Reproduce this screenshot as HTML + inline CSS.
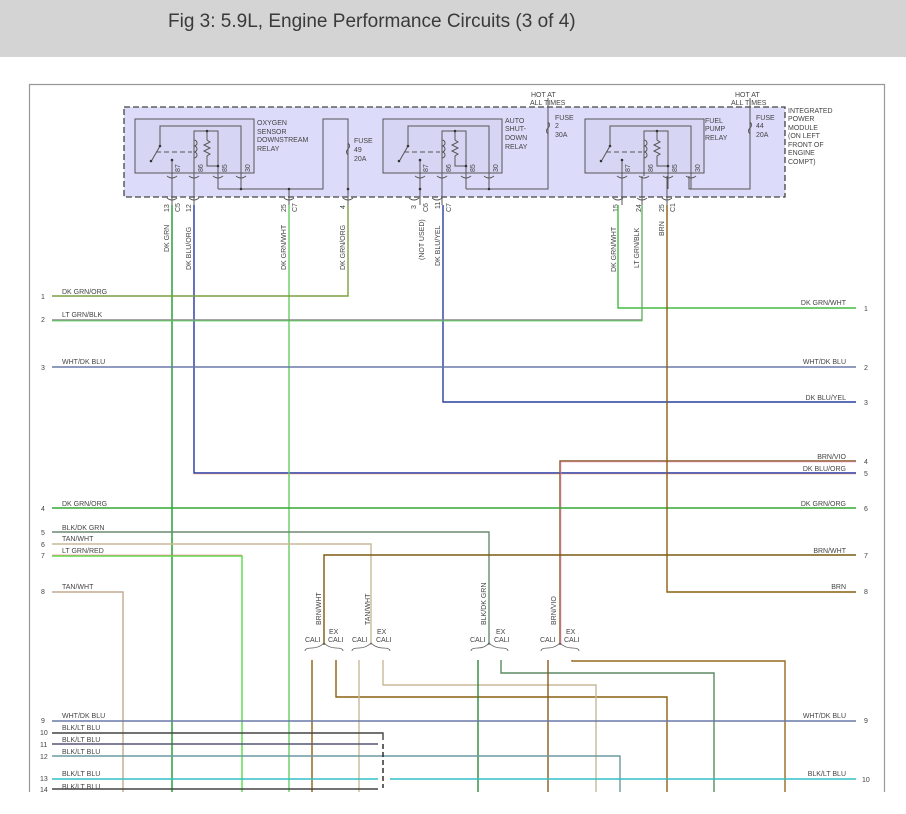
<!DOCTYPE html>
<html><head><meta charset="utf-8"><style>
html,body{margin:0;padding:0;background:#fff;}
body{width:906px;height:814px;overflow:hidden;position:relative;font-family:"Liberation Sans",sans-serif;}
.hdr{position:absolute;left:0;top:0;width:906px;height:57px;background:#d4d4d4;}
.hdr span{position:absolute;left:168px;top:11px;font-size:19px;color:#3a3a3a;}
svg{position:absolute;left:0;top:0;}
text{font-family:"Liberation Sans",sans-serif;font-size:7px;fill:#444;}
</style></head><body>
<div class="hdr"><span>Fig 3: 5.9L, Engine Performance Circuits (3 of 4)</span></div>
<svg width="906" height="814" viewBox="0 0 906 814">
<defs>
<g id="relay">
<rect x="135" y="119" width="119" height="54" fill="#d6d6f4" stroke="#555" stroke-width="1"/>
<path d="M160 146 V126 H241 V176" fill="none" stroke="#555"/>
<path d="M160 146 L152 160" stroke="#555" fill="none"/>
<circle cx="160" cy="146" r="1.3" fill="#333"/><circle cx="151" cy="161" r="1.3" fill="#333"/>
<path d="M156 152 H192" stroke="#555" stroke-dasharray="5,3" fill="none"/>
<path d="M194 176 V131 H218 V176" fill="none" stroke="#555"/>
<path d="M207 131 V140 l3 2 -6 3 6 3 -6 3 6 3 -3 2 V166 H218" fill="none" stroke="#555"/>
<path d="M194 140 a3 3 0 0 1 0 6 a3 3 0 0 1 0 6 a3 3 0 0 1 0 6" fill="none" stroke="#555"/>
<circle cx="207" cy="131" r="1.3" fill="#333"/><circle cx="218" cy="166" r="1.3" fill="#333"/>
<path d="M172 176 V161" stroke="#555"/><circle cx="172" cy="160" r="1.3" fill="#333"/>
<text x="0" y="0" transform="translate(180,172) rotate(-90)">87</text>
<text transform="translate(203,172) rotate(-90)">86</text>
<text transform="translate(227,172) rotate(-90)">85</text>
<text transform="translate(250,172) rotate(-90)">30</text>
<path d="M167 176 q5 4 10 0 M189 176 q5 4 10 0 M213 176 q5 4 10 0 M236 176 q5 4 10 0" fill="none" stroke="#555"/>
<path d="M218 176 V189 M241 176 V189" stroke="#555"/>
</g>
</defs>
<path d="M29.5 792 V84.5 H884.5 V792" fill="none" stroke="#999" stroke-width="1.2"/>
<rect x="124" y="107" width="661" height="90" fill="#dcdcfa" stroke="#444" stroke-width="1.3" stroke-dasharray="6,3"/>
<use href="#relay"/>
<use href="#relay" transform="translate(248,0)"/>
<use href="#relay" transform="translate(450,0)"/>
<g stroke="#555" fill="none">
<path d="M218 189 H323 V119 H348 V205"/>
<path d="M172 176 V205 M194 176 V205 M420 176 V205 M442 176 V205 M622 176 V205 M642 176 V205 M667 176 V205"/>
<path d="M289 189 V205"/>
<path d="M466 189 H548 V98"/>
<path d="M689 176 V189 H750 V98"/>
<path d="M348 143 q3 3 0 6 q-3 3 0 6"/><path d="M548 122 q3 3 0 6 q-3 3 0 6"/><path d="M750 122 q3 3 0 6 q-3 3 0 6"/>
<path d="M167 198 q5 4 10 0 M189 198 q5 4 10 0 M284 198 q5 4 10 0 M343 198 q5 4 10 0 M409 198 q5 4 10 0 M432 198 q5 4 10 0 M613 198 q5 4 10 0 M637 198 q5 4 10 0 M662 198 q5 4 10 0"/>
</g>
<g fill="#333"><circle cx="241" cy="189" r="1.3"/><circle cx="289" cy="189" r="1.3"/><circle cx="348" cy="189" r="1.3"/><circle cx="420" cy="189" r="1.3"/><circle cx="489" cy="189" r="1.3"/></g>
<text x="257" y="125">OXYGEN</text><text x="257" y="134">SENSOR</text><text x="257" y="142">DOWNSTREAM</text><text x="257" y="151">RELAY</text>
<text x="354" y="143">FUSE</text><text x="354" y="152">49</text><text x="354" y="161">20A</text>
<text x="505" y="123">AUTO</text><text x="505" y="131">SHUT-</text><text x="505" y="140">DOWN</text><text x="505" y="149">RELAY</text>
<text x="555" y="120">FUSE</text><text x="555" y="128">2</text><text x="555" y="137">30A</text>
<text x="531" y="97">HOT AT</text><text x="530" y="105">ALL TIMES</text>
<text x="705" y="123">FUEL</text><text x="705" y="131">PUMP</text><text x="705" y="140">RELAY</text>
<text x="756" y="120">FUSE</text><text x="756" y="128">44</text><text x="756" y="137">20A</text>
<text x="735" y="97">HOT AT</text><text x="731" y="105">ALL TIMES</text>
<text x="788" y="113">INTEGRATED</text><text x="788" y="121">POWER</text><text x="788" y="130">MODULE</text><text x="788" y="138">(ON LEFT</text><text x="788" y="147">FRONT OF</text><text x="788" y="155">ENGINE</text><text x="788" y="164">COMPT)</text>
<g>
<text transform="translate(169,212) rotate(-90)">13</text><text transform="translate(180,212) rotate(-90)">C5</text>
<text transform="translate(191,212) rotate(-90)">12</text>
<text transform="translate(286,212) rotate(-90)">25</text><text transform="translate(297,212) rotate(-90)">C7</text>
<text transform="translate(345,209) rotate(-90)">4</text>
<text transform="translate(416,209) rotate(-90)">3</text><text transform="translate(428,212) rotate(-90)">C6</text>
<text transform="translate(440,209) rotate(-90)">11</text><text transform="translate(451,212) rotate(-90)">C7</text>
<text transform="translate(618,212) rotate(-90)">15</text>
<text transform="translate(641,212) rotate(-90)">24</text>
<text transform="translate(664,212) rotate(-90)">25</text><text transform="translate(675,212) rotate(-90)">C1</text>
<text transform="translate(169,252) rotate(-90)">DK GRN</text>
<text transform="translate(191,270) rotate(-90)">DK BLU/ORG</text>
<text transform="translate(286,270) rotate(-90)">DK GRN/WHT</text>
<text transform="translate(345,270) rotate(-90)">DK GRN/ORG</text>
<text transform="translate(424,260) rotate(-90)">(NOT USED)</text>
<text transform="translate(440,266) rotate(-90)">DK BLU/YEL</text>
<text transform="translate(616,272) rotate(-90)">DK GRN/WHT</text>
<text transform="translate(639,268) rotate(-90)">LT GRN/BLK</text>
<text transform="translate(664,236) rotate(-90)">BRN</text>
<text transform="translate(321,625) rotate(-90)">BRN/WHT</text>
<text transform="translate(370,625) rotate(-90)">TAN/WHT</text>
<text transform="translate(486,625) rotate(-90)">BLK/DK GRN</text>
<text transform="translate(556,625) rotate(-90)">BRN/VIO</text>
</g>
<g fill="none" stroke-width="1.4">
<path d="M172 205 V792" stroke="#1c9a2a"/>
<path d="M194 205 V473 H856" stroke="#2535a8"/>
<path d="M194 474 H856" stroke="#e0a070" stroke-width="0.6"/>
<path d="M289 205 V792" stroke="#66cc66"/>
<path d="M52 296 H348 V205" stroke="#7aa040"/>
<path d="M443 205 V402 H856" stroke="#2540a0"/>
<path d="M856 308 H618 V205" stroke="#44bb44"/>
<path d="M52 320 H642 V205" stroke="#888"/>
<path d="M52 321 H642 V205" stroke="#44dd44" stroke-width="0.7"/>
<path d="M52 367 H856" stroke="#6a78aa"/>
<path d="M856 461 H560 V645" stroke="#8a5a20"/>
<path d="M856 462 H561 V645" stroke="#ee88dd" stroke-width="0.6"/>
<path d="M52 508 H856" stroke="#33aa33"/>
<path d="M52 532 H489 V645" stroke="#6a8a70"/>
<path d="M52 544 H371 V645" stroke="#c8b898"/>
<path d="M52 556 H242 V792" stroke="#55dd44"/>
<path d="M52 555 H242" stroke="#ee6666" stroke-width="0.6"/>
<path d="M856 555 H324 V645" stroke="#7a5a10"/>
<path d="M52 592 H123 V792" stroke="#c0aa90"/>
<path d="M667 205 V592 H856" stroke="#8a6010"/>
<path d="M312 660 V792" stroke="#8a6010"/>
<path d="M336 660 V697 H667 V792" stroke="#8a6010"/>
<path d="M359 660 V792" stroke="#c8b898"/>
<path d="M383 660 V685 H596 V792" stroke="#c8b898"/>
<path d="M478 660 V792" stroke="#2a8a3a"/>
<path d="M501 660 V673 H714 V792" stroke="#5a8a60"/>
<path d="M548 660 V792" stroke="#8a5a20"/>
<path d="M572 660 V661 H785 V792" stroke="#9a6a20"/>
<path d="M52 721 H856" stroke="#6a78aa"/>
<path d="M52 733 H383 V740" stroke="#444"/>
<path d="M52 744 H378" stroke="#557"/>
<path d="M52 756 H620 V792" stroke="#6a9aa0"/>
<path d="M52 779 H378 M390 779 H856" stroke="#30c0c8"/>
<path d="M52 789 H378" stroke="#444"/>
<path d="M383 744 V788" stroke="#222" stroke-dasharray="5,3"/>
</g>
<g fill="none" stroke="#555" stroke-width="0.8">
<path d="M305 651 q0 -3 7 -3 q7 0 12 -5 q5 5 12 5 q7 0 7 3"/>
<path d="M352 651 q0 -3 7 -3 q7 0 12 -5 q5 5 12 5 q7 0 7 3"/>
<path d="M471 651 q0 -3 7 -3 q7 0 11 -5 q5 5 12 5 q7 0 7 3"/>
<path d="M541 651 q0 -3 7 -3 q7 0 12 -5 q5 5 12 5 q7 0 7 3"/>
</g>
<text x="305" y="642">CALI</text><text x="329" y="634">EX</text><text x="328" y="642">CALI</text>
<text x="352" y="642">CALI</text><text x="377" y="634">EX</text><text x="376" y="642">CALI</text>
<text x="470" y="642">CALI</text><text x="496" y="634">EX</text><text x="494" y="642">CALI</text>
<text x="540" y="642">CALI</text><text x="566" y="634">EX</text><text x="564" y="642">CALI</text>
<g>
<text x="41" y="299">1</text><text x="62" y="294">DK GRN/ORG</text>
<text x="41" y="322">2</text><text x="62" y="317">LT GRN/BLK</text>
<text x="41" y="370">3</text><text x="62" y="364">WHT/DK BLU</text>
<text x="41" y="511">4</text><text x="62" y="506">DK GRN/ORG</text>
<text x="41" y="535">5</text><text x="62" y="530">BLK/DK GRN</text>
<text x="41" y="547">6</text><text x="62" y="541">TAN/WHT</text>
<text x="41" y="558">7</text><text x="62" y="553">LT GRN/RED</text>
<text x="41" y="594">8</text><text x="62" y="589">TAN/WHT</text>
<text x="41" y="723">9</text><text x="62" y="718">WHT/DK BLU</text>
<text x="40" y="735">10</text><text x="62" y="730">BLK/LT BLU</text>
<text x="40" y="747">11</text><text x="62" y="742">BLK/LT BLU</text>
<text x="40" y="759">12</text><text x="62" y="754">BLK/LT BLU</text>
<text x="40" y="781">13</text><text x="62" y="776">BLK/LT BLU</text>
<text x="40" y="792">14</text><text x="62" y="789">BLK/LT BLU</text>
</g>
<g text-anchor="end">
<text x="846" y="305">DK GRN/WHT</text><text x="846" y="364">WHT/DK BLU</text><text x="846" y="400">DK BLU/YEL</text>
<text x="846" y="459">BRN/VIO</text><text x="846" y="471">DK BLU/ORG</text><text x="846" y="506">DK GRN/ORG</text>
<text x="846" y="553">BRN/WHT</text><text x="846" y="589">BRN</text><text x="846" y="718">WHT/DK BLU</text><text x="846" y="776">BLK/LT BLU</text>
</g>
<g>
<text x="864" y="311">1</text><text x="864" y="370">2</text><text x="864" y="405">3</text><text x="864" y="464">4</text><text x="864" y="476">5</text>
<text x="864" y="511">6</text><text x="864" y="558">7</text><text x="864" y="594">8</text><text x="864" y="723">9</text><text x="862" y="782">10</text>
</g>
<rect x="0" y="793" width="906" height="21" fill="#fff"/>
</svg>
</body></html>
